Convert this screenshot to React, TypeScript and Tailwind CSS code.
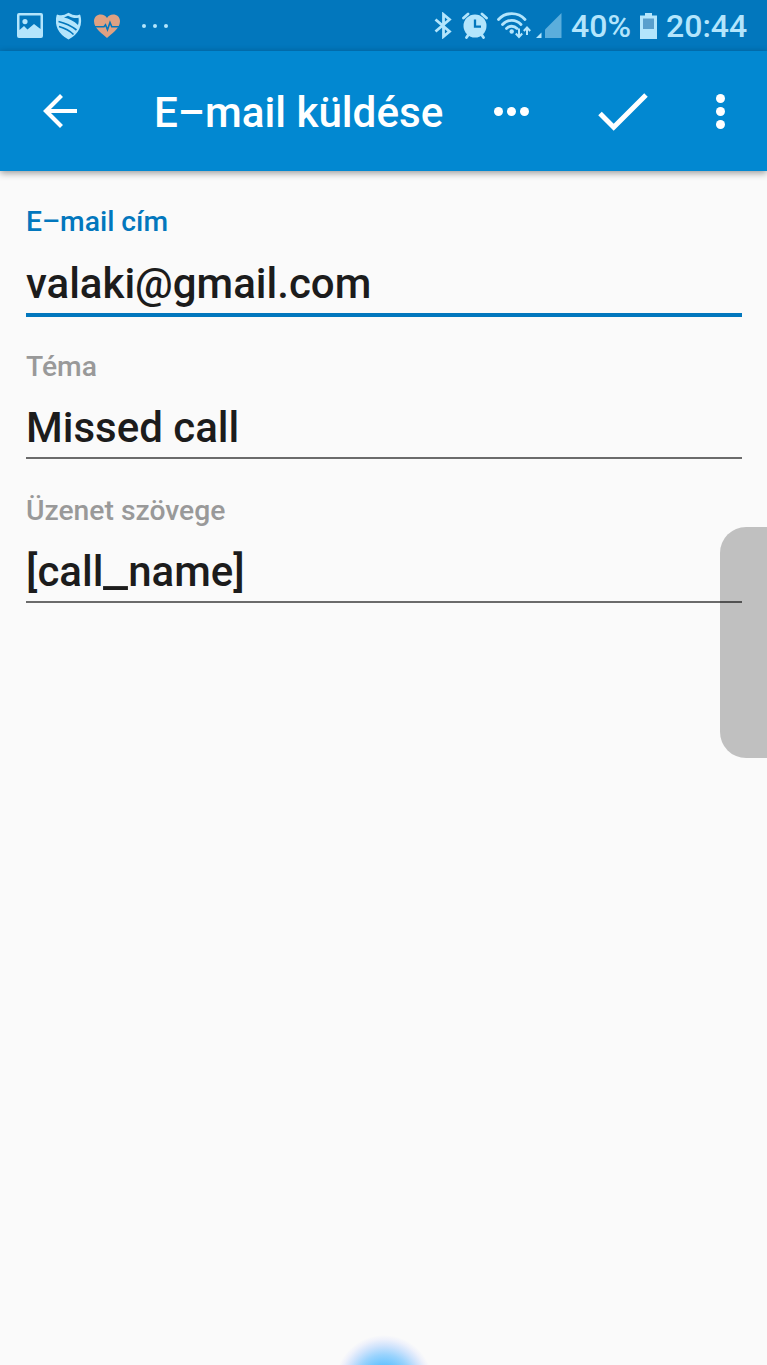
import { useState } from 'react';

type Field = {
  id: string;
  label: string;
  value: string;
};

const fields: Field[] = [
  { id: 'email', label: 'E–mail cím', value: 'valaki@gmail.com' },
  { id: 'subject', label: 'Téma', value: 'Missed call' },
  { id: 'body', label: 'Üzenet szövege', value: '[call_name]' },
];

export default function App() {
  const [active, setActive] = useState('email');

  return (
    <div className="relative flex h-[1365px] w-[767px] flex-col overflow-hidden bg-[#fafafa] font-[Roboto,sans-serif] font-medium">
      <StatusBar />
      <AppBar />
      <main className="flex flex-col pt-[30px] pl-[26px] pr-[25px]">
        {fields.map((field) => (
          <FormField
            key={field.id}
            field={field}
            active={field.id === active}
            onSelect={() => setActive(field.id)}
          />
        ))}
      </main>

      {/* edge panel handle */}
      <div className="pointer-events-none absolute top-[527px] right-0 h-[231px] w-[47px] rounded-l-[26px] bg-black/23" />
      {/* home button glow */}
      <div className="pointer-events-none absolute top-[1335px] left-[335px] h-[98px] w-[98px] rounded-full bg-[radial-gradient(closest-side,#55bbff_0%,#66c3ff_38%,#9ad3fd_60%,#cfe3fc_78%,#eef1fb_91%,#fafafa00_100%)]" />
    </div>
  );
}

function StatusBar() {
  return (
    <header className="flex h-[51px] shrink-0 items-center justify-between bg-[#0277bd] pr-[19px] pl-[17px] text-[#b3e5fc]">
      <div className="flex items-center">
        <svg width="26" height="25" viewBox="0 0 26 25" fill="currentColor">
          <path
            fillRule="evenodd"
            d="M2 0h22a2 2 0 0 1 2 2v21a2 2 0 0 1-2 2H2a2 2 0 0 1-2-2V2a2 2 0 0 1 2-2ZM2.500 2.500v14.500l4.500-4 3.500 3.500 6.500-5.500 6.500 5V2.500ZM8 6a2.600 2.600 0 1 1 0 5.200A2.600 2.600 0 0 1 8 6Z"
          />
        </svg>
        <svg className="ml-[13px]" width="26" height="28" viewBox="0 0 26 28" fill="none">
          <path
            d="M1.500 3.500C5 5 9 4 12.500 1.700 16 4 20 5 23.500 3.500 26 13 22 21.500 12.500 26.500 3 21.500-1 13 1.500 3.500Z"
            fill="currentColor"
            stroke="currentColor"
            strokeWidth="1.800"
            strokeLinejoin="round"
          />
          <path
            d="M12 3.700c3.500 2 7 2.700 10.500 2.100.4 2.500.2 5-.5 7.200C18 9 13 6.500 8 5.500Z"
            fill="#0277bd"
          />
          <path d="M2.500 9.500C9 11 16 14.500 20.500 18M3 14.500c5.500 1.500 11 4.500 14.500 8" stroke="#0277bd" strokeWidth="1.700" />
        </svg>
        <svg className="ml-[12px]" width="26" height="24" viewBox="0 0 26 24">
          <path
            d="M13 24C9 20 0 14.500 0 7.200 0 3 3 .5 6.800.5 9.500.5 11.800 1.800 13 4 14.200 1.800 16.500.5 19.200.5 23 .5 26 3 26 7.200 26 14.500 17 20 13 24Z"
            fill="#dfa182"
          />
          <path d="M1 12.800h9l1.500-2 2 5L16 8.500l1.800 4.300H25" fill="none" stroke="#0277bd" strokeWidth="1.600" />
        </svg>
        <div className="ml-[22px] flex gap-[7px]">
          <span className="size-[4px] rounded-full bg-current" />
          <span className="size-[4px] rounded-full bg-current" />
          <span className="size-[4px] rounded-full bg-current" />
        </div>
      </div>

      <div className="flex items-center">
        <svg width="18" height="27" viewBox="0 0 18 27" fill="none" stroke="currentColor" strokeWidth="2.800">
          <path d="M1.500 7.500 15.500 19.500 9.500 24.500V2.500l6 5L1.500 19.500" />
        </svg>
        <svg className="ml-[10px]" width="26" height="27" viewBox="0 0 26 27" fill="none" stroke="currentColor">
          <circle cx="13" cy="14" r="11.500" fill="currentColor" stroke="none" />
          <path d="m1.500 6 4.500-4M24.500 6 20 2M4.500 25.500l2-3M21.500 25.500l-2-3" strokeWidth="2.800" strokeLinecap="round" />
          <path d="M13 7.500v7.200h6" stroke="#0277bd" strokeWidth="2.300" />
        </svg>
        <svg className="ml-[9px]" width="35" height="27" viewBox="0 0 35 27" fill="none" stroke="currentColor" strokeWidth="2.800">
          <path d="M1.500 7.500C8.500-.3 21-.3 28 7.500" strokeLinecap="round" />
          <path d="M5.500 12.500c5.200-5.600 13.300-5.600 18.500 0M9.500 16.500c3-3 7.500-3 10.500 0" strokeLinecap="round" />
          <circle cx="14.700" cy="19.500" r="2.200" fill="currentColor" stroke="none" />
          <path d="M22 16.500v8M18.800 21.500l3.200 3.500 3.200-3.500M30 23v-7M26.800 19l3.200-3.500 3.200 3.500" strokeWidth="2" />
        </svg>
        <svg className="ml-[4px]" width="26" height="27" viewBox="0 0 26 27" fill="currentColor">
          <path d="M25.500 1v25H9V17.500Z" opacity=".5" />
          <path d="M5.500 20.500V26H0Z" />
        </svg>
        <span className="ml-[9px] w-[60px] pt-[1px] text-[32px] leading-none whitespace-nowrap">40%</span>
        <svg className="ml-[9px]" width="17" height="26" viewBox="0 0 17 26" fill="currentColor">
          <path d="M5 0h7v2.500h5V26H0V2.500h5Z" />
          <path d="M3 5.500h11V16H3Z" fill="#599fcd" />
        </svg>
        <span className="ml-[9px] w-[82px] pt-[1px] text-[32px] leading-none whitespace-nowrap">20:44</span>
      </div>
    </header>
  );
}

function AppBar() {
  return (
    <nav className="flex h-[120px] shrink-0 items-center bg-[#0288d1] text-white shadow-[0_2px_7px_rgba(0,0,0,0.4)]">
      <button type="button" aria-label="Vissza" className="ml-[43px]">
        <svg width="34" height="34" viewBox="0 0 34 34" fill="none" stroke="currentColor" strokeWidth="4.200">
          <path d="M34 17H4M18.500 1.500 3 17l15.500 15.500" />
        </svg>
      </button>
      <h1 className="ml-[77px] w-[290px] pt-[4px] text-[42.200px] leading-none whitespace-nowrap">E–mail küldése</h1>
      <button type="button" aria-label="Változók" className="ml-[50px] flex gap-[4px]">
        <span className="size-[9px] rounded-full bg-white" />
        <span className="size-[9px] rounded-full bg-white" />
        <span className="size-[9px] rounded-full bg-white" />
      </button>
      <button type="button" aria-label="Mentés" className="ml-[69px] pt-[1px]">
        <svg width="50" height="38" viewBox="0 0 50 38" fill="none" stroke="currentColor" strokeWidth="5">
          <path d="m2 20.500 13.700 13.700L48 2" />
        </svg>
      </button>
      <button type="button" aria-label="Továbbiak" className="ml-[68px] flex flex-col gap-[4px]">
        <span className="size-[9px] rounded-full bg-white" />
        <span className="size-[9px] rounded-full bg-white" />
        <span className="size-[9px] rounded-full bg-white" />
      </button>
    </nav>
  );
}

function FormField({ field, active, onSelect }: { field: Field; active: boolean; onSelect: () => void }) {
  return (
    <div className="h-[144.500px]" onClick={onSelect}>
      <p className={`pt-[1px] text-[28.250px] leading-[40px] ${active ? 'text-[#0277bd]' : 'text-[#999999]'}`}>
        {field.label}
      </p>
      <div
        className={`text-[42px] leading-[54px] whitespace-nowrap text-[#1c1c1c] ${
          active ? 'mt-[15px] h-[60px] border-b-4 border-[#0277bd]' : 'mt-[14px] h-[58px] border-b-2 border-[#6b6b6b]'
        }`}
      >
        {field.value.split('_').map((part, index) => (
          <span key={index}>
            {/* placeholder names use a wide underscore */}
            {index > 0 && <span className="mr-[6px] inline-block origin-left scale-x-133">_</span>}
            {part}
          </span>
        ))}
      </div>
    </div>
  );
}
